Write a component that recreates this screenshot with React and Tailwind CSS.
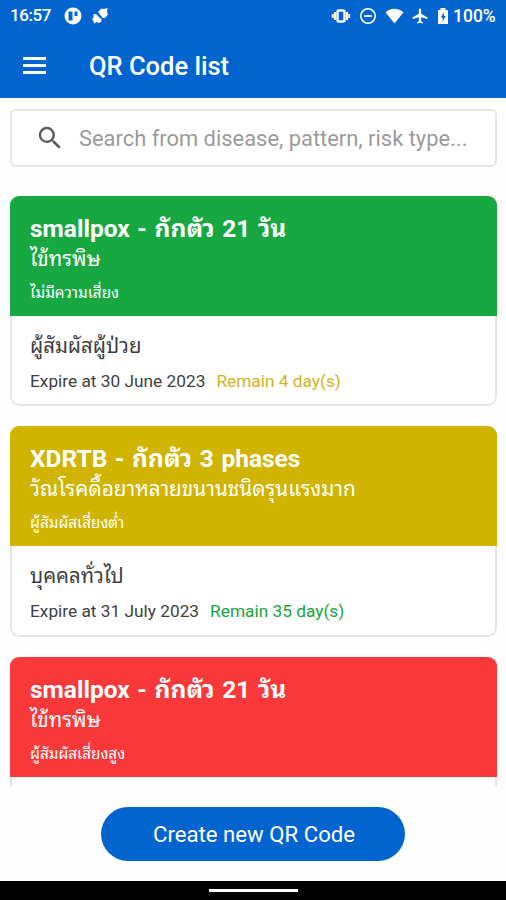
import { MdSearch, MdAirplanemodeActive } from "react-icons/md";

const qrCodes = [
  {
    id: 1,
    title: "smallpox - กักตัว 21 วัน",
    disease: "ไข้ทรพิษ",
    risk: "ไม่มีความเสี่ยง",
    person: "ผู้สัมผัสผู้ป่วย",
    expire: "Expire at 30 June 2023",
    remain: "Remain 4 day(s)",
    headerColor: "bg-[#18a841]",
    remainColor: "text-[#d0b322]",
  },
  {
    id: 2,
    title: "XDRTB - กักตัว 3 phases",
    disease: "วัณโรคดื้อยาหลายขนานชนิดรุนแรงมาก",
    risk: "ผู้สัมผัสเสี่ยงต่ำ",
    person: "บุคคลทั่วไป",
    expire: "Expire at 31 July 2023",
    remain: "Remain 35 day(s)",
    headerColor: "bg-[#d0b400]",
    remainColor: "text-[#18a33c]",
  },
  {
    id: 3,
    title: "smallpox - กักตัว 21 วัน",
    disease: "ไข้ทรพิษ",
    risk: "ผู้สัมผัสเสี่ยงสูง",
    person: "",
    expire: "",
    remain: "",
    headerColor: "bg-[#f9383a]",
    remainColor: "text-[#d0b322]",
  },
];

const StatusBar = () => {
  return (
    <div className="flex h-8 items-center justify-between pl-[10px] pr-[9px] text-[17px] font-medium">
      <div className="flex items-center">
        <span className="w-[54px] tracking-[-0.4px]">16:57</span>
        <svg className="size-[18px]" viewBox="0 0 18 18">
          <circle cx="9" cy="9" r="8.5" fill="white" />
          <path d="M4.5 4.5h4v9h-4zM10.5 4.5h3v4.5h-3z" fill="#0265cf" />
        </svg>
        <svg className="ml-[9px] size-[18px]" viewBox="0 0 18 18" fill="white">
          <path d="M7 5 10.5 1.5 13 2 16.5 1 16 5 17 7.5 14 11 11.8 11z" />
          <path d="M2.5 7.5 5 7 10.8 12.8 10 15 7.5 16 6 15 3 16.5 2.5 14 1 12.5 2.5 10.5z" />
        </svg>
      </div>
      <div className="flex items-center">
        <svg className="h-[18px] w-5" viewBox="0 0 20 18" fill="none" stroke="white">
          <rect x="6.5" y="3.5" width="7" height="11" rx="1.5" strokeWidth="2.4" />
          <path d="M4 5v8M16 5v8M1.8 7v4M18.2 7v4" strokeWidth="2" />
        </svg>
        <svg className="ml-2 size-[18px]" viewBox="0 0 18 18" fill="none" stroke="white" strokeWidth="1.6">
          <circle cx="9" cy="9" r="7.2" />
          <path d="M5.3 9h7.4" strokeWidth="2" />
        </svg>
        <svg className="ml-2 h-[18px] w-[19px]" viewBox="0 0 19 18" fill="white">
          <path d="M9.5 16.5 0.5 5.3C5.5 0.6 13.5 0.6 18.5 5.3z" />
        </svg>
        <MdAirplanemodeActive className="ml-[7px] size-[18px]" />
        <svg className="ml-[8px] h-[18px] w-3" viewBox="0 0 12 18">
          <path d="M1 3h2.5V1h5v2H11v14H1z" fill="white" />
          <path d="M6.8 5.3 3.7 10.5h2v4l3.1-5.4h-2z" fill="#0265cf" />
        </svg>
        <span className="ml-[4px] w-[44px] text-[17.5px]">100%</span>
      </div>
    </div>
  );
};

const QrCard = ({ item }) => {
  return (
    <div className="h-[210.4px] shrink-0 overflow-hidden whitespace-nowrap rounded-[9px] bg-white">
      <div className={`h-[120px] pl-5 pt-[17px] text-white ${item.headerColor}`}>
        <h2 className="h-8 text-[24.5px] font-bold leading-8 [word-spacing:1.5px]">{item.title}</h2>
        <p className="h-7 text-[20.7px] leading-7">{item.disease}</p>
        <p className="mt-2 h-6 text-[15.3px] leading-6">{item.risk}</p>
      </div>
      <div className="h-[90.4px] rounded-b-[9px] border-x-2 border-b-2 border-[#e5e5e5] pl-[18px] pt-4 text-[#3f3f3f]">
        <p className="h-7 text-[20.4px] leading-7">{item.person}</p>
        <p className="mt-[9px] flex h-6 gap-[11px] text-[17.3px] leading-6">
          <span>{item.expire}</span>
          <span className={item.remainColor}>{item.remain}</span>
        </p>
      </div>
    </div>
  );
};

const App = () => {
  return (
    <div className="flex h-[900px] w-[506px] flex-col overflow-hidden bg-[#fefefe] font-[Roboto,'Noto_Sans_Thai_Looped','Noto_Looped_Thai',Loma,Waree,Garuda,'Droid_Sans_Thai','Noto_Serif_Thai',sans-serif]">
      <header className="h-[98px] shrink-0 bg-[#0265cf] text-white">
        <StatusBar />
        <div className="flex h-[66px] items-center pl-[23px]">
          <button className="flex w-[66px] flex-col gap-[4px]">
            <span className="h-[3px] w-[23px] bg-white" />
            <span className="h-[3px] w-[23px] bg-white" />
            <span className="h-[3px] w-[23px] bg-white" />
          </button>
          <h1 className="pt-0.5 text-[25.5px] font-medium leading-8">QR Code list</h1>
        </div>
      </header>

      <main className="flex h-[689px] shrink-0 flex-col overflow-hidden px-2.5 pt-[11px]">
        <label className="mb-[29px] flex h-[58px] w-[487px] shrink-0 items-center rounded-md border-2 border-[#e5e5e5] bg-white pl-[23px]">
          <MdSearch className="size-[30px] text-[#5b5b5b]" />
          <span className="ml-[14px] whitespace-nowrap pt-0.5 text-[21.9px] text-[#9b9b9b]">
            Search from disease, pattern, risk type...
          </span>
        </label>
        <div className="flex w-[487px] flex-col gap-5">
          {qrCodes.map((item) => (
            <QrCard key={item.id} item={item} />
          ))}
        </div>
      </main>

      <div className="flex h-[94px] shrink-0 justify-center pt-5">
        <button className="h-[54px] w-[304px] rounded-full bg-[#0265cf] pl-0.5 pt-0.5 text-[22.2px] text-white">
          Create new QR Code
        </button>
      </div>

      <div className="flex h-[19px] shrink-0 items-center justify-center bg-black">
        <span className="h-[3px] w-[89px] bg-white" />
      </div>
    </div>
  );
};

export default App;
